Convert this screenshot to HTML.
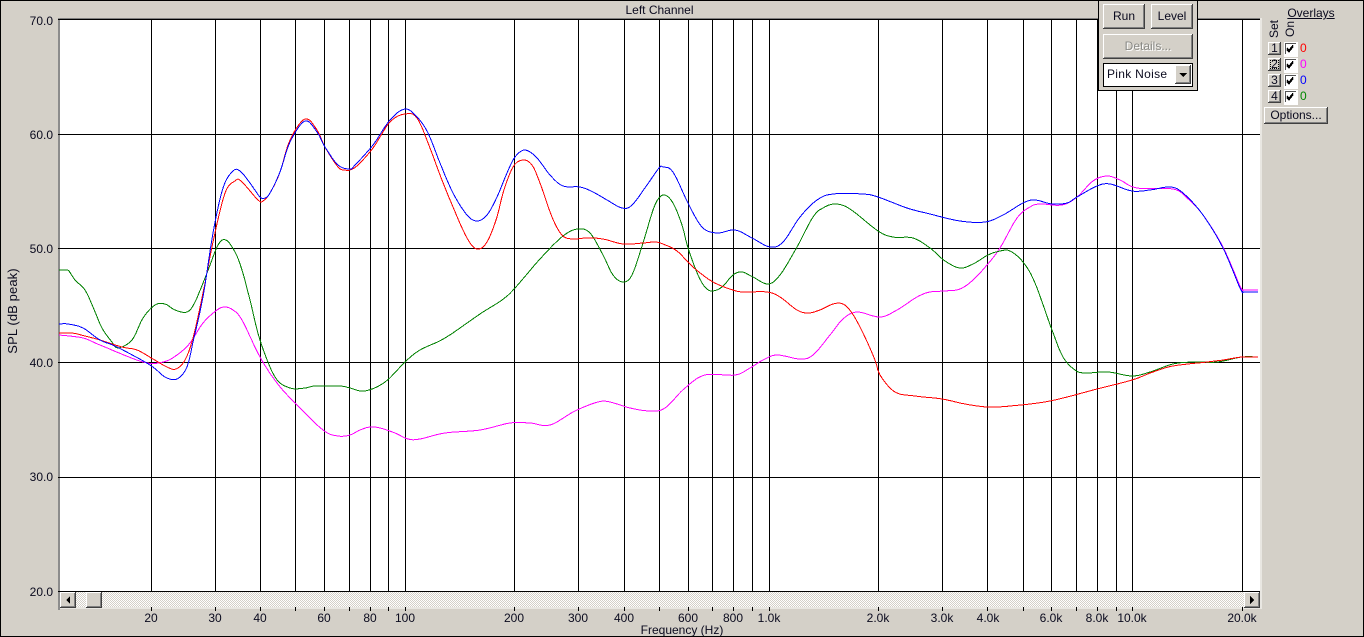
<!DOCTYPE html>
<html><head><meta charset="utf-8"><style>
html,body{margin:0;padding:0;background:#d4d0c8}
#p{position:relative;width:1362px;height:635px;border:1px solid #000;overflow:hidden;background:#d4d0c8;font:12px/14px "Liberation Sans",sans-serif;color:#0a0a1e}
#p>*{position:absolute}
#a{left:-1px;top:-1px;width:1364px;height:637px}
.yl{left:0;width:52px;text-align:right;height:14px}
.xl{width:80px;text-align:center;top:610px;height:14px}
.b{background:#d4d0c8;box-shadow:inset -1px -1px #404040,inset 1px 1px #fff,inset -2px -2px #808080;text-align:center;box-sizing:border-box}
.cb{left:1283px;width:14px;height:15px;background:#fff}
.cb i{position:absolute;left:1px;top:1px;width:11px;height:11px;border-top:1px solid #555;border-left:1px solid #555;box-sizing:border-box;background:#fff;outline:0}
.cb svg{position:absolute;left:0;top:0}
.z{left:1299px;width:8px;height:14px;font-size:12px}
.n{left:1267px;width:13px;height:13px;line-height:13px}
.r{transform:rotate(-90deg);transform-origin:center;white-space:nowrap;text-align:center}
</style></head><body><div id="p">
<svg id="a" viewBox="0 0 1364 637" shape-rendering="crispEdges">
<defs><pattern id="d" width="2" height="2" patternUnits="userSpaceOnUse"><rect width="2" height="2" fill="#fff"/><rect width="1" height="1" fill="#d4d0c8"/><rect x="1" y="1" width="1" height="1" fill="#d4d0c8"/></pattern></defs>
<rect x="60" y="20" width="1200" height="572" fill="#fff"/>
<rect x="58" y="18" width="1202" height="1" fill="#808080"/>
<rect x="58" y="18" width="2" height="592" fill="#8c8c8c"/>
<rect x="60" y="607" width="1202" height="2" fill="#e9e7e2"/>
<rect x="1260" y="18" width="2" height="591" fill="#e9e7e2"/>
<rect x="60" y="592" width="1200" height="15" fill="url(#d)"/>
<g fill="#000">
<rect x="58" y="19" width="1202" height="1"/><rect x="58" y="134" width="1202" height="1"/><rect x="58" y="248" width="1202" height="1"/><rect x="58" y="362" width="1202" height="1"/><rect x="58" y="477" width="1202" height="1"/><rect x="58" y="591" width="1202" height="1"/>
<path d="M151 20h1v571h-1zM215 20h1v571h-1zM260 20h1v571h-1zM295 20h1v571h-1zM324 20h1v571h-1zM349 20h1v571h-1zM370 20h1v571h-1zM388 20h1v571h-1zM405 20h1v571h-1zM514 20h1v571h-1zM578 20h1v571h-1zM624 20h1v571h-1zM659 20h1v571h-1zM688 20h1v571h-1zM712 20h1v571h-1zM733 20h1v571h-1zM752 20h1v571h-1zM769 20h1v571h-1zM878 20h1v571h-1zM942 20h1v571h-1zM987 20h1v571h-1zM1023 20h1v571h-1zM1051 20h1v571h-1zM1076 20h1v571h-1zM1097 20h1v571h-1zM1116 20h1v571h-1zM1132 20h1v571h-1zM1242 20h1v571h-1z"/>
<path d="M151 607h1v4h-1zM215 607h1v4h-1zM260 607h1v4h-1zM295 607h1v4h-1zM324 607h1v4h-1zM349 607h1v4h-1zM370 607h1v4h-1zM388 607h1v4h-1zM405 607h1v4h-1zM514 607h1v4h-1zM578 607h1v4h-1zM624 607h1v4h-1zM659 607h1v4h-1zM688 607h1v4h-1zM712 607h1v4h-1zM733 607h1v4h-1zM752 607h1v4h-1zM769 607h1v4h-1zM878 607h1v4h-1zM942 607h1v4h-1zM987 607h1v4h-1zM1023 607h1v4h-1zM1051 607h1v4h-1zM1076 607h1v4h-1zM1097 607h1v4h-1zM1116 607h1v4h-1zM1132 607h1v4h-1zM1242 607h1v4h-1z"/>
</g>
<g fill="none" stroke-width="1">
<polyline class="c" stroke="#ff00ff" points="59,335 83,338 100,345 143,362 163,362 177,355 190,343 203,323 217,310 225,307 233,310 242,320 260,357 277,383 295,403 323,430 338,436 350,435 360,430 370,427 380,428 395,433 408,439 420,439 445,433 480,430 510,423 530,423 550,425 575,411 598,402 610,402 630,408 650,411 665,408 685,388 705,375 735,375 750,368 763,360 777,355 800,359 813,355 830,335 843,319 857,312 880,317 897,310 917,297 930,292 945,291 960,289 973,280 987,265 1000,248 1017,218 1030,207 1040,204 1062,205 1077,197 1093,181 1107,176 1120,180 1137,188 1173,189 1187,198 1203,215 1223,247 1240,286 1243,290 1246,290 1258,290"/>
<polyline class="c" stroke="#008000" points="59,270 66,270 69,271 75,280 85,290 93,307 102,328 112,342 118,348 132,340 143,318 155,305 165,304 175,310 187,312 195,302 207,273 218,245 226,240 235,252 242,270 250,300 260,340 275,377 290,388 305,388 315,386 340,386 350,388 365,391 385,382 405,362 420,350 445,338 480,314 502,300 515,288 540,259 563,236 578,229 590,233 603,255 613,275 623,282 632,275 643,243 653,210 659,198 665,195 673,203 682,225 688,248 698,275 705,287 712,291 722,287 733,275 742,272 753,277 768,284 780,275 797,247 813,217 823,208 835,204 850,209 878,231 893,237 913,238 930,248 945,261 960,268 973,264 988,255 1000,251 1010,251 1023,262 1035,283 1052,330 1063,357 1075,370 1085,373 1108,372 1132,376 1150,372 1173,364 1193,362 1217,362 1242,357 1258,357"/>
<polyline class="c" stroke="#ff0000" points="59,333 72,333 85,336 100,340 122,347 137,350 153,359 167,367 176,369 185,360 193,338 203,293 213,242 225,193 235,181 241,181 258,200 263,201 270,193 280,172 290,140 305,119 317,130 325,147 338,167 345,170 350,170 358,165 373,148 390,122 405,114 417,118 430,148 440,175 453,207 467,238 477,249 487,242 497,217 503,193 513,167 523,160 532,165 540,183 552,217 562,235 572,239 587,238 603,239 623,244 643,243 655,242 663,244 677,251 693,267 713,282 733,290 743,292 767,292 780,297 797,310 808,313 820,310 833,304 843,304 852,313 863,333 875,360 880,375 895,392 915,396 942,399 965,404 988,407 1010,406 1050,401 1097,389 1132,380 1153,372 1173,366 1207,362 1223,360 1242,357 1258,357"/>
<polyline class="c" stroke="#0000ff" points="59,324 68,324 83,328 100,340 117,347 150,365 165,377 177,379 187,367 193,342 203,297 213,233 223,188 233,171 240,171 250,183 260,197 265,198 270,193 280,172 290,142 305,121 317,132 325,147 338,165 350,169 355,165 373,145 390,120 405,109 417,117 428,133 440,163 453,193 467,215 477,221 487,215 497,197 507,173 515,157 525,150 537,158 550,175 563,186 580,187 593,192 607,200 622,208 632,205 647,185 659,168 663,167 673,172 688,203 702,227 717,233 735,230 752,238 770,247 783,242 800,217 817,200 833,194 863,194 878,197 907,208 930,214 960,221 985,222 1003,215 1023,203 1035,200 1052,204 1067,203 1077,197 1097,186 1110,184 1132,191 1150,190 1170,187 1183,193 1203,215 1223,248 1240,288 1243,292 1246,292 1258,292"/>
</g>
</svg>
<script>
document.querySelectorAll('.c').forEach(function(e){var p=e.getAttribute('points').split(' ').map(function(s){return s.split(',').map(Number)}),o=[];
for(var i=0;i<p.length-1;i++){var a=p[Math.max(i-1,0)],b=p[i],c=p[i+1],d=p[Math.min(i+2,p.length-1)],n=Math.max(1,Math.round((c[0]-b[0])/2));
for(var j=0;j<n;j++){var t=j/n,f=function(k){return .5*(2*b[k]+(c[k]-a[k])*t+(2*a[k]-5*b[k]+4*c[k]-d[k])*t*t+(3*b[k]-a[k]-3*c[k]+d[k])*t*t*t)};o.push(f(0).toFixed(1)+','+f(1).toFixed(1))}}
o.push(p[p.length-1].join(','));e.setAttribute('points',o.join(' '))});
</script>
<div style="left:600px;top:2px;width:117px;text-align:center;height:14px">Left Channel</div>
<div class="yl" style="top:13px">70.0</div><div class="yl" style="top:127px">60.0</div><div class="yl" style="top:241px">50.0</div><div class="yl" style="top:355px">40.0</div><div class="yl" style="top:469px">30.0</div><div class="yl" style="top:584px">20.0</div>
<div class="r" style="left:-38px;top:303px;width:100px;height:14px;font-size:13px;letter-spacing:.1px">SPL (dB peak)</div>
<div class="xl" style="left:110px">20</div><div class="xl" style="left:174px">30</div><div class="xl" style="left:219px">40</div><div class="xl" style="left:283px">60</div><div class="xl" style="left:329px">80</div><div class="xl" style="left:364px">100</div><div class="xl" style="left:473px">200</div><div class="xl" style="left:537px">300</div><div class="xl" style="left:583px">400</div><div class="xl" style="left:647px">600</div><div class="xl" style="left:692px">800</div><div class="xl" style="left:728px">1.0k</div><div class="xl" style="left:837px">2.0k</div><div class="xl" style="left:901px">3.0k</div><div class="xl" style="left:947px">4.0k</div><div class="xl" style="left:1010px">6.0k</div><div class="xl" style="left:1056px">8.0k</div><div class="xl" style="left:1091px">10.0k</div><div class="xl" style="left:1201px">20.0k</div>
<div style="left:621px;top:622px;width:120px;text-align:center;height:14px">Frequency (Hz)</div>
<div class="b" style="left:59px;top:591px;width:16px;height:16px"><svg width="16" height="16" style="position:absolute;left:0;top:0" shape-rendering="crispEdges"><path d="M6 8l4-4v8z" fill="#000"/></svg></div>
<div class="b" style="left:85px;top:591px;width:16px;height:16px"></div>
<div class="b" style="left:1243px;top:591px;width:16px;height:16px"><svg width="16" height="16" style="position:absolute;left:0;top:0" shape-rendering="crispEdges"><path d="M10 8l-4-4v8z" fill="#000"/></svg></div>
<div style="left:1097px;top:-2px;width:98px;height:90px;border:1px solid #000;background:#d4d0c8"></div>
<div class="b" style="left:1102px;top:3px;width:42px;height:25px;line-height:24px">Run</div>
<div class="b" style="left:1150px;top:3px;width:42px;height:25px;line-height:24px">Level</div>
<div class="b" style="left:1102px;top:33px;width:90px;height:25px;line-height:24px;color:#8a8a86;text-shadow:1px 1px #fff">Details...</div>
<div style="left:1102px;top:62px;width:88px;height:22px;border:1px solid #000;background:#fff;line-height:21px"><span style="margin-left:3px;letter-spacing:.3px">Pink Noise</span></div>
<div class="b" style="left:1174px;top:64px;width:16px;height:19px"><svg width="16" height="19" style="position:absolute;left:0;top:0" shape-rendering="crispEdges"><path d="M4 8h8l-4 4z" fill="#000"/></svg></div>
<div style="left:1286px;top:5px;width:48px;height:14px;text-decoration:underline;text-align:center">Overlays</div>
<div class="r" style="left:1258px;top:21px;width:30px;height:14px">Set</div>
<div class="r" style="left:1274px;top:21px;width:30px;height:14px">On</div>
<div class="b n" style="top:41px">1</div><div class="b n" style="top:57px;outline:1px dotted #000;outline-offset:-3px">2</div><div class="b n" style="top:73px">3</div><div class="b n" style="top:89px">4</div>
<div class="cb" style="top:41px"><i></i><svg width="14" height="15" shape-rendering="crispEdges"><path d="M3 6l2 2 4-5M3 7l2 2 4-5M3 8l2 2 4-5" fill="none" stroke="#000"/></svg></div>
<div class="cb" style="top:57px"><i></i><svg width="14" height="15" shape-rendering="crispEdges"><path d="M3 6l2 2 4-5M3 7l2 2 4-5M3 8l2 2 4-5" fill="none" stroke="#000"/></svg></div>
<div class="cb" style="top:73px"><i></i><svg width="14" height="15" shape-rendering="crispEdges"><path d="M3 6l2 2 4-5M3 7l2 2 4-5M3 8l2 2 4-5" fill="none" stroke="#000"/></svg></div>
<div class="cb" style="top:89px"><i></i><svg width="14" height="15" shape-rendering="crispEdges"><path d="M3 6l2 2 4-5M3 7l2 2 4-5M3 8l2 2 4-5" fill="none" stroke="#000"/></svg></div>
<div class="z" style="top:40px;color:#f00">0</div><div class="z" style="top:56px;color:#f0f">0</div><div class="z" style="top:72px;color:#00f">0</div><div class="z" style="top:88px;color:#080">0</div>
<div class="b" style="left:1263px;top:106px;width:64px;height:17px;line-height:16px">Options...</div>
</div></body></html>
